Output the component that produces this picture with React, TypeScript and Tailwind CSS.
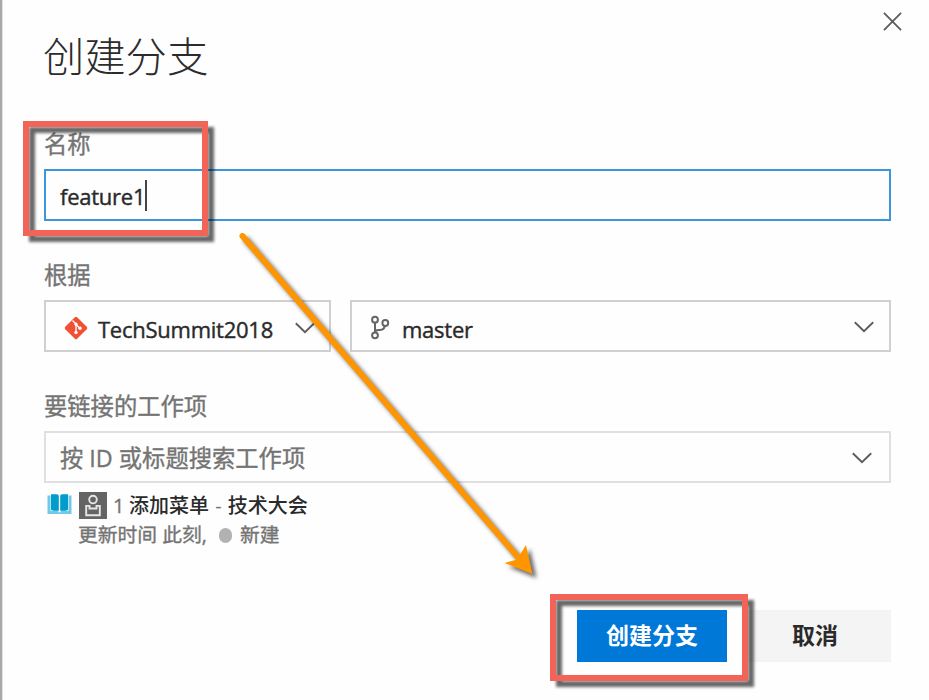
import React from "react";

const textFont = "font-['Open_Sans','Noto_Sans_CJK_SC',sans-serif]";
const valueText = "text-[22px] leading-[30px] tracking-[-0.25px] text-[#2a2a2a] [-webkit-text-stroke:0.4px_#2a2a2a]";
const labelText = "h-[39px] shrink-0 text-[23.3px] leading-[28px] text-[#747474] [-webkit-text-stroke:0.35px_#747474]";

function Chevron({ className = "" }: { className?: string }) {
  return (
    <svg className={`shrink-0 ${className}`} width="20" height="12" viewBox="0 0 20 12" fill="none" stroke="#5c5c5c" strokeWidth="1.9">
      <path d="M0.8 1.2 10 10.2 19.2 1.2" />
    </svg>
  );
}

function GitLogo() {
  return (
    <svg className="mt-1 shrink-0" width="24" height="24" viewBox="0 0 24 24">
      <rect x="3.6" y="3.6" width="16.8" height="16.8" rx="1.6" transform="rotate(45 12 12)" fill="#f25035" />
      <path d="M8.5 4.5 12 8v8.5M12 8.5l3.8 3.8" stroke="#fff" strokeWidth="1.3" fill="none" />
      <circle cx="12" cy="8.2" r="1.6" fill="#fff" />
      <circle cx="12" cy="16.4" r="1.7" fill="#fff" />
      <circle cx="16" cy="12.3" r="1.7" fill="#fff" />
    </svg>
  );
}

function BranchIcon() {
  return (
    <svg className="mt-[3px] shrink-0" width="20" height="26" viewBox="0 0 20 26" fill="none" stroke="#666" strokeWidth="2">
      <circle cx="5" cy="4.7" r="2.9" />
      <circle cx="5" cy="20.3" r="2.9" />
      <circle cx="15.3" cy="8" r="2.9" />
      <path d="M5 7.6v9.8M14.8 10.9c-.4 3-1.8 4-4.8 4H8.5c-2 0-3.5 .9-3.5 2.5" />
    </svg>
  );
}

function BookIcon() {
  return (
    <svg className="shrink-0" width="25" height="22" viewBox="0 0 25 22">
      <path d="M0.5 2.5h3v15.3h7.8v1.4h2.4v-1.4h7.8V2.5h3V21H0.5z" fill="#72c9e4" />
      <path d="M4 1.3h5.5c1.5 0 2.3.7 2.3 2v14.5H6.5L4 16.8zM13.2 3.3c0-1.3.8-2 2.3-2H21v15.5l-2.5 1h-5.3z" fill="#009ccc" />
    </svg>
  );
}

function PersonIcon() {
  return (
    <svg className="shrink-0" width="28" height="27" viewBox="0 0 28 27">
      <rect width="28" height="27" fill="#646464" />
      <g fill="none" stroke="#e6e6e6" strokeWidth="1.9">
        <circle cx="14" cy="7.6" r="3.8" />
        <path d="M7.2 13.9h3.3v2.6h7v-2.6h3.3v9.3H7.2z" />
      </g>
    </svg>
  );
}

export default function App() {
  return (
    <div className={`relative h-[700px] w-[929px] overflow-hidden border-l-2 border-[#a9a9a9] bg-[#fefefe] ${textFont}`}>
      <div className="flex h-full flex-col border-l border-[#e4e4e4] pr-[38px] pl-[41px]">
        <header className="flex h-[130px] shrink-0 items-start justify-between">
          <h1 className="mt-[26px] -ml-px text-[41.3px] leading-[60px] font-light text-[#2c2c2c]">创建分支</h1>
          <svg className="mt-3 -mr-[11px] shrink-0" width="19" height="19" viewBox="0 0 20 20" stroke="#5c5c5c" strokeWidth="1.9">
            <path d="M1 1 19 19M19 1 1 19" />
          </svg>
        </header>

        <label className={labelText}>名称</label>
        <div className="flex h-[52px] shrink-0 items-center border-2 border-[#3a96dd] pl-[14px]">
          <span className={`mt-[2px] ${valueText}`}>feature1</span>
          <span className="h-[31px] w-[2px] bg-[#444]" />
        </div>

        <label className={`mt-[40px] ${labelText}`}>根据</label>
        <div className="flex h-[52px] shrink-0 gap-[19px]">
          <div className="flex w-[287px] items-center border-2 border-[#d0d0d0] pl-[18px]">
            <GitLogo />
            <span className={`mt-[5px] ml-[10px] w-[176px] ${valueText}`}>TechSummit2018</span>
            <Chevron className="mt-1 ml-[21px]" />
          </div>
          <div className="flex flex-1 items-center border-2 border-[#d0d0d0] pr-[15px] pl-[18px]">
            <BranchIcon />
            <span className={`mt-[5px] ml-[12px] flex-1 ${valueText}`}>master</span>
            <Chevron className="mt-[2px]" />
          </div>
        </div>

        <label className={`mt-[40px] ${labelText}`}>要链接的工作项</label>
        <div className="flex h-[52px] shrink-0 items-center justify-between border-2 border-[#e0e0e0] pr-[17px] pl-[14px]">
          <span className="mt-[2px] text-[23.3px] leading-[30px] text-[#747474] [-webkit-text-stroke:0.35px_#747474]">按 ID 或标题搜索工作项</span>
          <Chevron className="mt-[2px]" />
        </div>

        <div className="mt-2 flex h-[58px] shrink-0">
          <div className="flex w-[35px] pt-[2px] pl-[3px]"><BookIcon /></div>
          <div className="flex flex-col">
            <div className="flex h-[28px] items-center text-[20px] leading-[28px] text-[#2a2a2a]">
              <PersonIcon />
              <span className="mt-px ml-[6px] w-[16px] text-[#747474] [-webkit-text-stroke:0.35px_#747474]">1</span>
              <span className="mt-px font-medium">添加菜单 <span className="mx-[1px] text-[#707070]">-</span> 技术大会</span>
            </div>
            <div className="flex h-[30px] items-center pt-px text-[19.8px] leading-[30px] text-[#747474] [-webkit-text-stroke:0.35px_#747474]">
              <span className="-ml-px">更新时间 此刻,</span>
              <span className="mr-[8px] ml-[12px] mt-[2px] h-[15px] w-[13px] rounded-full bg-[#b2b2b2]" />
              <span>新建</span>
            </div>
          </div>
        </div>

        <footer className="mt-[61px] flex h-[52px] shrink-0 justify-end gap-[15px]">
          <button className="w-[150px] bg-[#0078d7] pb-[2px] text-[23px] leading-[50px] font-bold text-white">创建分支</button>
          <button className="w-[149px] bg-[#f4f4f4] pr-[3px] pb-[2px] text-[23px] leading-[50px] font-bold text-[#2a2a2a]">取消</button>
        </footer>
      </div>

      <div className="absolute top-[121px] left-[21px] h-[115px] w-[185px] border-6 border-[#f26458] drop-shadow-[6px_6px_1.5px_rgba(0,0,0,0.6)]" />
      <div className="absolute top-[594px] left-[548px] h-[87px] w-[198px] border-6 border-[#f26458] drop-shadow-[6px_6px_1.5px_rgba(0,0,0,0.6)]" />
      <svg className="absolute top-0 -left-[2px] drop-shadow-[4px_4px_2px_rgba(0,0,0,0.6)]" width="929" height="700" viewBox="0 0 929 700">
        <path d="M242.5 236 522 562" stroke="#ff9500" strokeWidth="6" strokeLinecap="round" />
        <path d="M532.5 574 504.5 563 517 559.5 526 545z" fill="#ff9500" />
      </svg>
    </div>
  );
}
